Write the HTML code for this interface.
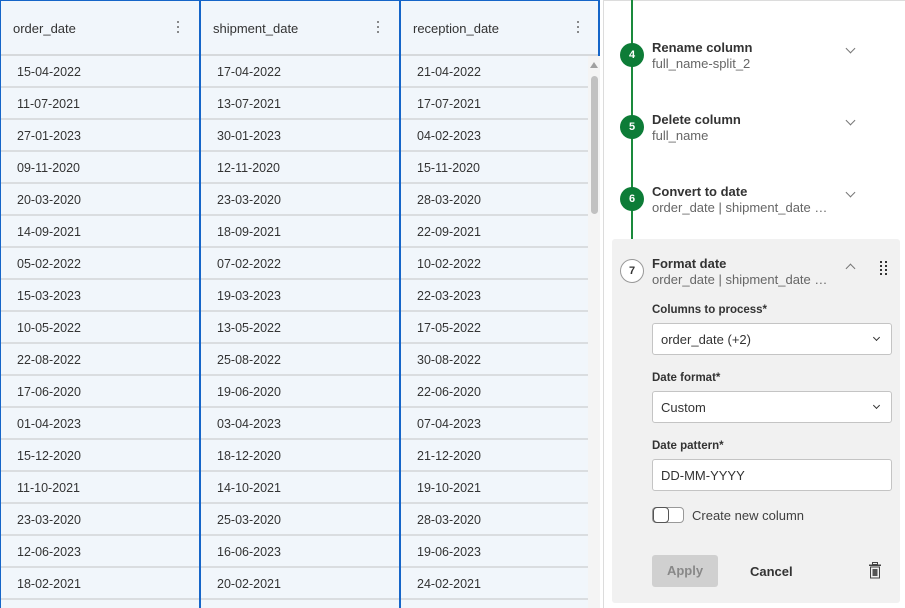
<!DOCTYPE html>
<html><head><meta charset="utf-8"><style>
*{box-sizing:border-box;margin:0;padding:0}
body{width:905px;height:608px;overflow:hidden;background:#fff;font-family:"Liberation Sans",sans-serif;color:#404040;position:relative}
.tbl{position:absolute;left:0;top:0;width:600px;height:608px;background:#f1f6fb}
.hd{position:absolute;top:0;height:56px;border-bottom:2px solid #d6d9dc;font-size:13px;color:#333}
.col{position:absolute;top:0;height:608px;width:2px;background:#1565c8}
.hd span{position:absolute;left:13px;top:21px}
.dots{position:absolute;right:20px;top:21px;width:3px}
.dots i{display:block;width:2px;height:2px;background:#666;margin-bottom:3px;border-radius:1px}
.row{position:absolute;left:0;width:588px;height:32px;border-bottom:2px solid #dadde0;font-size:12.5px;color:#333}
.row span{position:absolute;top:9px}
.sb{position:absolute;left:588px;top:56px;width:12px;height:552px;background:#f4f4f4}
.sb .th{position:absolute;left:3px;top:20px;width:7px;height:138px;background:#c1c1c1;border-radius:4px}
.panel{position:absolute;left:603px;top:0;width:302px;height:608px;border-left:1px solid #dcdcdc;border-top:1px solid #dcdcdc}
.line{position:absolute;left:631px;top:0;width:2px;height:240px;background:#1a8a3c}
.circ{position:absolute;left:620px;width:24px;height:24px;border-radius:50%;background:#0d7c37;color:#fff;font-size:11px;font-weight:bold;text-align:center;line-height:24px}
.t{position:absolute;left:652px;font-size:13px;font-weight:bold;color:#333}
.s{position:absolute;left:652px;font-size:13px;color:#666}
.chev{position:absolute;left:847px;width:7px;height:7px;border-right:1.3px solid #777;border-bottom:1.3px solid #777;transform:rotate(45deg)}
.box{position:absolute;left:612px;top:239px;width:288px;height:364px;background:#f1f1f1;border-radius:3px}
.lbl{position:absolute;left:652px;font-size:11.5px;font-weight:bold;color:#333}
.inp{position:absolute;left:652px;width:240px;height:32px;background:#fff;border:1px solid #c4c4c4;border-radius:3px;font-size:13px;color:#333;padding:8px 0 0 8px}
.inp .c{position:absolute;right:12px;top:11px;width:5px;height:5px;border-right:1.5px solid #333;border-bottom:1.5px solid #333;transform:rotate(45deg)}
</style></head><body>
<div class="tbl">
<div class="hd" style="left:0;width:600px"></div>
<div class="hd" style="left:0;width:200px"><span>order_date</span><div class="dots"><i></i><i></i><i></i></div></div>
<div class="hd" style="left:200px;width:200px"><span>shipment_date</span><div class="dots"><i></i><i></i><i></i></div></div>
<div class="hd" style="left:400px;width:200px"><span>reception_date</span><div class="dots"><i></i><i></i><i></i></div></div>
<div style="position:absolute;left:0;top:0;width:600px;height:1px;background:#1565c8"></div>
<div class="row" style="top:56px"><span style="left:17px">15-04-2022</span><span style="left:217px">17-04-2022</span><span style="left:417px">21-04-2022</span></div>
<div class="row" style="top:88px"><span style="left:17px">11-07-2021</span><span style="left:217px">13-07-2021</span><span style="left:417px">17-07-2021</span></div>
<div class="row" style="top:120px"><span style="left:17px">27-01-2023</span><span style="left:217px">30-01-2023</span><span style="left:417px">04-02-2023</span></div>
<div class="row" style="top:152px"><span style="left:17px">09-11-2020</span><span style="left:217px">12-11-2020</span><span style="left:417px">15-11-2020</span></div>
<div class="row" style="top:184px"><span style="left:17px">20-03-2020</span><span style="left:217px">23-03-2020</span><span style="left:417px">28-03-2020</span></div>
<div class="row" style="top:216px"><span style="left:17px">14-09-2021</span><span style="left:217px">18-09-2021</span><span style="left:417px">22-09-2021</span></div>
<div class="row" style="top:248px"><span style="left:17px">05-02-2022</span><span style="left:217px">07-02-2022</span><span style="left:417px">10-02-2022</span></div>
<div class="row" style="top:280px"><span style="left:17px">15-03-2023</span><span style="left:217px">19-03-2023</span><span style="left:417px">22-03-2023</span></div>
<div class="row" style="top:312px"><span style="left:17px">10-05-2022</span><span style="left:217px">13-05-2022</span><span style="left:417px">17-05-2022</span></div>
<div class="row" style="top:344px"><span style="left:17px">22-08-2022</span><span style="left:217px">25-08-2022</span><span style="left:417px">30-08-2022</span></div>
<div class="row" style="top:376px"><span style="left:17px">17-06-2020</span><span style="left:217px">19-06-2020</span><span style="left:417px">22-06-2020</span></div>
<div class="row" style="top:408px"><span style="left:17px">01-04-2023</span><span style="left:217px">03-04-2023</span><span style="left:417px">07-04-2023</span></div>
<div class="row" style="top:440px"><span style="left:17px">15-12-2020</span><span style="left:217px">18-12-2020</span><span style="left:417px">21-12-2020</span></div>
<div class="row" style="top:472px"><span style="left:17px">11-10-2021</span><span style="left:217px">14-10-2021</span><span style="left:417px">19-10-2021</span></div>
<div class="row" style="top:504px"><span style="left:17px">23-03-2020</span><span style="left:217px">25-03-2020</span><span style="left:417px">28-03-2020</span></div>
<div class="row" style="top:536px"><span style="left:17px">12-06-2023</span><span style="left:217px">16-06-2023</span><span style="left:417px">19-06-2023</span></div>
<div class="row" style="top:568px"><span style="left:17px">18-02-2021</span><span style="left:217px">20-02-2021</span><span style="left:417px">24-02-2021</span></div>
<div class="col" style="left:0;width:1px"></div>
<div class="col" style="left:199px"></div>
<div class="col" style="left:399px"></div>
<div class="col" style="left:598px;height:56px"></div>
<div class="sb"><div style="position:absolute;left:2px;top:6px;border-left:4px solid transparent;border-right:4px solid transparent;border-bottom:6px solid #a0a0a0"></div><div class="th"></div></div>
</div>
<div class="panel"></div>
<div class="line"></div>
<div style="position:absolute;left:632px;top:240px;width:1px;height:20px;background:#aaa"></div>
<div class="circ" style="top:43px">4</div>
<div class="t" style="top:40px">Rename column</div><div class="s" style="top:56px">full_name-split_2</div><div class="chev" style="top:45px"></div>
<div class="circ" style="top:115px">5</div>
<div class="t" style="top:112px">Delete column</div><div class="s" style="top:128px">full_name</div><div class="chev" style="top:117px"></div>
<div class="circ" style="top:187px">6</div>
<div class="t" style="top:184px">Convert to date</div><div class="s" style="top:200px">order_date | shipment_date …</div><div class="chev" style="top:189px"></div>
<div class="box"></div>
<div class="circ" style="top:259px;background:#fff;border:1px solid #999;color:#333;line-height:22px">7</div>
<div class="t" style="top:256px">Format date</div><div class="s" style="top:272px">order_date | shipment_date …</div>
<div class="chev" style="top:265px;transform:rotate(-135deg)"></div>
<div style="position:absolute;left:880px;top:261px;width:8px;font-size:0">
<div style="display:grid;grid-template-columns:2px 2px;gap:2px 3px"><i style="width:2px;height:2px;background:#333"></i><i style="width:2px;height:2px;background:#333"></i><i style="width:2px;height:2px;background:#333"></i><i style="width:2px;height:2px;background:#333"></i><i style="width:2px;height:2px;background:#333"></i><i style="width:2px;height:2px;background:#333"></i><i style="width:2px;height:2px;background:#333"></i><i style="width:2px;height:2px;background:#333"></i></div></div>
<div class="lbl" style="top:304px">Columns to process*</div>
<div class="inp" style="top:323px">order_date (+2)<div class="c"></div></div>
<div class="lbl" style="top:372px">Date format*</div>
<div class="inp" style="top:391px">Custom<div class="c"></div></div>
<div class="lbl" style="top:440px">Date pattern*</div>
<div class="inp" style="top:459px">DD-MM-YYYY</div>
<div style="position:absolute;left:652px;top:507px;width:32px;height:16px;border:1px solid #999;border-radius:4px;background:#fff"><div style="position:absolute;left:0;top:-1px;width:16px;height:16px;border:1.5px solid #555;border-radius:4px;background:#fff"></div></div>
<div style="position:absolute;left:692px;top:508px;font-size:13px;color:#404040">Create new column</div>
<div style="position:absolute;left:652px;top:555px;width:66px;height:32px;background:#d0d0d0;border-radius:3px;color:#888;font-size:13px;font-weight:bold;text-align:center;line-height:32px">Apply</div>
<div style="position:absolute;left:750px;top:564px;font-size:13px;font-weight:bold;color:#333">Cancel</div>
<svg style="position:absolute;left:868px;top:562px" width="14" height="17" viewBox="0 0 14 17"><rect x="4.5" y="0.5" width="5" height="2" fill="none" stroke="#444"/><rect x="1" y="2.5" width="12" height="1.5" fill="#444"/><rect x="2.5" y="5" width="9" height="11" fill="none" stroke="#444"/><rect x="4.5" y="7" width="5" height="7" fill="#555"/></svg>
</body></html>
